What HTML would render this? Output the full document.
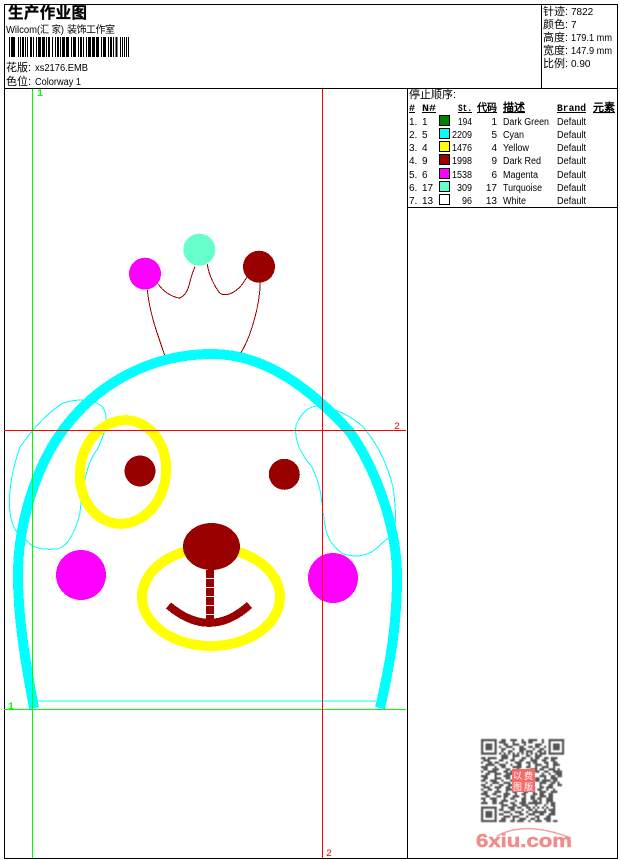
<!DOCTYPE html>
<html lang="zh">
<head>
<meta charset="utf-8">
<title>生产作业图</title>
<style>
html,body{margin:0;padding:0;background:#fff}
svg{display:block}
text{font-family:"Liberation Sans","WenQuanYi Zen Hei","Noto Sans CJK SC",sans-serif;font-size:10px;fill:#000}
.cn{font-size:11px}
.b{font-family:"Liberation Mono","WenQuanYi Zen Hei",monospace;font-weight:bold;font-size:10px;text-decoration:underline}
.g{fill:#00ff00;font-family:"Liberation Mono",monospace;font-weight:bold}
.r{fill:#ff0000;font-family:"Liberation Mono",monospace}
.s{font-size:9px;fill:#fff}
</style>
</head>
<body>
<svg width="620" height="860" viewBox="0 0 620 860" xmlns="http://www.w3.org/2000/svg">
<defs><clipPath id="qc"><rect x="0" y="0" width="37" height="37"/></clipPath></defs>
<rect width="620" height="860" fill="#fff"/>
<g shape-rendering="crispEdges" fill="none">
<g stroke="#000" stroke-width="1">
<path d="M4.5 4.5H617.5V858.5H4.5Z"/>
<path d="M4 88.5H618M541.5 4V88M407.5 88V858M407 207.5H618"/>
</g>
<path d="M9.5 37v20M11.5 37v20M14.5 37v20M18.5 37v20M20.5 37v20M25.5 37v20M27.5 37v20M33.5 37v20M36.5 37v20M40.5 37v20M44.5 37v20M46.5 37v20M52.5 37v20M55.5 37v20M60.5 37v20M64.5 37v20M68.5 37v20M71.5 37v20M75.5 37v20M78.5 37v20M83.5 37v20M86.5 37v20M90.5 37v20M94.5 37v20M98.5 37v20M101.5 37v20M105.5 37v20M108.5 37v20M113.5 37v20M120.5 37v20M122.5 37v20M124.5 37v20M126.5 37v20M128.5 37v20" stroke="#000"/>
<path d="M13 37v20M23 37v20M31 37v20M39 37v20M43 37v20M49 37v20M58 37v20M63 37v20M67 37v20M74 37v20M81 37v20M89 37v20M93 37v20M97 37v20M104 37v20M111 37v20M116.500 37v20" stroke="#000" stroke-width="2"/>
</g>

<text x="8" y="18" style="font-family:'Noto Sans CJK SC','WenQuanYi Zen Hei',sans-serif;font-size:15.5px;font-weight:bold;stroke:#000;stroke-width:.3" textLength="79">生产作业图</text>
<text x="6" y="33" textLength="31" lengthAdjust="spacingAndGlyphs">Wilcom</text>
<text x="37" y="33" textLength="27" lengthAdjust="spacingAndGlyphs">(汇 家)</text>
<text x="67" y="33" style="font-size:10px" textLength="48">装饰工作室</text>
<text x="6" y="71" class="cn">花版:</text><text x="35" y="71" textLength="53" lengthAdjust="spacingAndGlyphs">xs2176.EMB</text>
<text x="6" y="85" class="cn">色位:</text><text x="35" y="85" textLength="46" lengthAdjust="spacingAndGlyphs">Colorway 1</text>

<text x="543" y="15" class="cn">针迹:</text><text x="571" y="15">7822</text>
<text x="543" y="28" class="cn">颜色:</text><text x="571" y="28">7</text>
<text x="543" y="41" class="cn">高度:</text><text x="571" y="41" textLength="41" lengthAdjust="spacingAndGlyphs">179.1 mm</text>
<text x="543" y="54" class="cn">宽度:</text><text x="571" y="54" textLength="41" lengthAdjust="spacingAndGlyphs">147.9 mm</text>
<text x="543" y="67" class="cn">比例:</text><text x="571" y="67">0.90</text>

<text x="409" y="98" class="cn">停止顺序:</text>
<text x="409" y="111" class="b">#</text><text x="422" y="111" class="b" textLength="14" lengthAdjust="spacingAndGlyphs">N#</text>
<text x="458" y="111" class="b" textLength="14" lengthAdjust="spacingAndGlyphs">St.</text><text x="477" y="111" class="b" style="font-size:10px">代码</text>
<text x="503" y="111" class="b" style="font-size:11px">描述</text><text x="557" y="111" class="b" textLength="29" lengthAdjust="spacingAndGlyphs">Brand</text>
<text x="593" y="111" class="b" style="font-size:11px">元素</text>

<g shape-rendering="crispEdges" stroke="#000">
<rect x="439.500" y="115.500" width="10" height="10" fill="#008000"/>
<rect x="439.500" y="128.500" width="10" height="10" fill="#00ffff"/>
<rect x="439.500" y="141.500" width="10" height="10" fill="#ffff00"/>
<rect x="439.500" y="154.500" width="10" height="10" fill="#990000"/>
<rect x="439.500" y="168.500" width="10" height="10" fill="#ff00ff"/>
<rect x="439.500" y="181.500" width="10" height="10" fill="#66ffcc"/>
<rect x="439.500" y="194.500" width="10" height="10" fill="#ffffff"/>
</g>

<g>
<text x="409" y="125">1.</text><text x="422" y="125">1</text><text x="458" y="125" textLength="14" lengthAdjust="spacingAndGlyphs">194</text><text x="497" y="125" text-anchor="end">1</text><text x="503" y="125" textLength="46" lengthAdjust="spacingAndGlyphs">Dark Green</text><text x="557" y="125" textLength="29" lengthAdjust="spacingAndGlyphs">Default</text>
<text x="409" y="138">2.</text><text x="422" y="138">5</text><text x="452" y="138" textLength="20" lengthAdjust="spacingAndGlyphs">2209</text><text x="497" y="138" text-anchor="end">5</text><text x="503" y="138" textLength="21" lengthAdjust="spacingAndGlyphs">Cyan</text><text x="557" y="138" textLength="29" lengthAdjust="spacingAndGlyphs">Default</text>
<text x="409" y="151">3.</text><text x="422" y="151">4</text><text x="452" y="151" textLength="20" lengthAdjust="spacingAndGlyphs">1476</text><text x="497" y="151" text-anchor="end">4</text><text x="503" y="151" textLength="26" lengthAdjust="spacingAndGlyphs">Yellow</text><text x="557" y="151" textLength="29" lengthAdjust="spacingAndGlyphs">Default</text>
<text x="409" y="164">4.</text><text x="422" y="164">9</text><text x="452" y="164" textLength="20" lengthAdjust="spacingAndGlyphs">1998</text><text x="497" y="164" text-anchor="end">9</text><text x="503" y="164" textLength="38" lengthAdjust="spacingAndGlyphs">Dark Red</text><text x="557" y="164" textLength="29" lengthAdjust="spacingAndGlyphs">Default</text>
<text x="409" y="178">5.</text><text x="422" y="178">6</text><text x="452" y="178" textLength="20" lengthAdjust="spacingAndGlyphs">1538</text><text x="497" y="178" text-anchor="end">6</text><text x="503" y="178" textLength="35" lengthAdjust="spacingAndGlyphs">Magenta</text><text x="557" y="178" textLength="29" lengthAdjust="spacingAndGlyphs">Default</text>
<text x="409" y="191">6.</text><text x="422" y="191">17</text><text x="457" y="191" textLength="15" lengthAdjust="spacingAndGlyphs">309</text><text x="497" y="191" text-anchor="end">17</text><text x="503" y="191" textLength="39" lengthAdjust="spacingAndGlyphs">Turquoise</text><text x="557" y="191" textLength="29" lengthAdjust="spacingAndGlyphs">Default</text>
<text x="409" y="204">7.</text><text x="422" y="204">13</text><text x="462" y="204" textLength="10" lengthAdjust="spacingAndGlyphs">96</text><text x="497" y="204" text-anchor="end">13</text><text x="503" y="204" textLength="23" lengthAdjust="spacingAndGlyphs">White</text><text x="557" y="204" textLength="29" lengthAdjust="spacingAndGlyphs">Default</text>
</g>

<!-- design -->
<g shape-rendering="crispEdges" fill="none">
<path stroke="#990000" stroke-width="1" d="M147.300 290C149 305 152 318 156.700 331.700S163 351 165.300 356.700"/>
<path stroke="#990000" stroke-width="1" d="M158.300 284.300C163 291 170 296 179.300 298.300C186 295 188 290 190 281.700S193 272 195 266.700"/>
<path stroke="#990000" stroke-width="1" d="M207.300 264.300C209 276 215 287 220 293.300C226 297 235 293 241.700 285L247.300 276.700"/>
<path stroke="#990000" stroke-width="1" d="M260.300 281.700C260 298 257 312 251.700 328.300C248 340 244 348 240 354.300"/>
<circle cx="145" cy="273.700" r="16" fill="#ff00ff"/>
<circle cx="199.300" cy="249.700" r="16" fill="#66ffcc"/>
<circle cx="259" cy="266.700" r="16" fill="#990000"/>

<path stroke="#00ffff" stroke-width="1" d="M26 540 C33 549 43 550 57 549 C68 547 76 530 80 513 C82 490 87 461 97 450 C105 433 110 420 103 407 C93 399 80 398 63 403 C47 413 32 430 20 447 C12 470 8 493 10 513 C12 528 18 535 26 540Z"/>
<path stroke="#00ffff" stroke-width="1" d="M323.500 513 C325 535 330 545 343 554 C357 558 370 556 380 545 C388 538 392 535 394 534 C396 525 396 505 393 487 C387 463 377 443 363 427 C350 415 337 410 323 406 C310 405 303 410 296 425 C294 440 300 453 312 467 C318 480 321 490 322 505"/>
<path stroke="#00ffff" stroke-width="1" d="M37 701H376"/>

<path stroke="#00ffff" stroke-width="10" d="M34 708C26 665 18 620 18 575C18 525 35 468 63 430C100 380 155 354 212 354C265 354 310 388 350 432C375 468 397 525 397 577C397 625 390 665 380 708"/>

<ellipse cx="123" cy="472" rx="43" ry="52" transform="rotate(8 123 472)" stroke="#ffff00" stroke-width="10"/>
<ellipse cx="211" cy="597" rx="69" ry="49" stroke="#ffff00" stroke-width="10"/>
<circle cx="140" cy="471" r="15.500" fill="#990000"/>
<circle cx="284.300" cy="474.300" r="15.500" fill="#990000"/>
<circle cx="81" cy="575" r="25" fill="#ff00ff"/>
<circle cx="333" cy="578" r="25" fill="#ff00ff"/>
<ellipse cx="211.500" cy="546.500" rx="28.500" ry="23.500" fill="#990000"/>
<path d="M210 570V623" stroke="#990000" stroke-width="8" stroke-dasharray="8 1"/>
<path d="M168.500 605.500Q210 640.500 249.500 605" stroke="#990000" stroke-width="8"/>

<path stroke="#00ff00" stroke-width="1" d="M32.500 89V858M4 709.500H406"/>
<path stroke="#ff0000" stroke-width="1" d="M322.500 89V858M4 430.500H406"/>
</g>
<text x="37" y="96" class="g">1</text>
<text x="8" y="709" class="g">1</text>
<text x="394" y="429" class="r">2</text>
<text x="326" y="856" class="r">2</text>

<!-- QR -->
<g transform="translate(481 739) scale(2.25)" fill="none" style="filter:blur(.2px)">
<g clip-path="url(#qc)">
<path stroke="#555" stroke-width="1" d="M0 .5h7m2 0h2m2 0h3m2 0h1m2 0h4m2 0h1m3 0h7M0 1.500h1m5 0h1m1 0h3m3 0h1m3 0h2m1 0h2m4 0h1m1 0h1m5 0h1M0 2.500h1m1 0h3m1 0h1m3 0h2m2 0h3m2 0h1m4 0h3m2 0h1m1 0h3m1 0h1M0 3.500h1m1 0h3m1 0h1m1 0h1m2 0h3m3 0h2m2 0h2m1 0h2m2 0h1m1 0h3m1 0h1M0 4.500h1m1 0h3m1 0h1m2 0h2m3 0h1m2 0h3m3 0h1m2 0h2m1 0h1m1 0h3m1 0h1M0 5.500h1m5 0h1m2 0h1m2 0h2m3 0h2m1 0h3m2 0h2m1 0h1m5 0h1M0 6.500h7m1 0h1m1 0h1m1 0h1m1 0h1m1 0h1m1 0h1m1 0h1m1 0h1m1 0h1m1 0h7M9 7.500h3m2 0h3m3 0h2m2 0h3M0 8.500h2m1 0h4m2 0h3m2 0h1m3 0h2m2 0h1m1 0h2m2 0h2m1 0h3M1 9.500h3m4 0h2m3 0h2m2 0h2m3 0h3m2 0h2m2 0h2M0 10.500h1m2 0h2m1 0h2m3 0h1m3 0h3m2 0h2m1 0h2m3 0h2m2 0h2M2 11.500h4m2 0h3m2 0h1m2 0h2m3 0h1m2 0h3m2 0h1m2 0h3M0 12.500h3m3 0h1m2 0h2m3 0h4m2 0h2m2 0h1m2 0h3m2 0h1M1 13.500h2m2 0h3m3 0h2m3 0h1m5 0h3m1 0h2m2 0h3m1 0h1M0 14.500h1m2 0h4m3 0h2m1 0h1m10 0h2m2 0h2m2 0h4M2 15.500h2m2 0h3m2 0h3m13 0h1m2 0h1m2 0h3M0 16.500h3m3 0h1m3 0h3m13 0h3m2 0h2m1 0h2M1 17.500h2m3 0h3m2 0h2m11 0h2m2 0h1m2 0h3M0 18.500h2m2 0h3m2 0h1m3 0h2m9 0h2m1 0h4m1 0h2M2 19.500h1m2 0h3m2 0h3m13 0h3m2 0h2m1 0h1M0 20.500h2m2 0h1m3 0h2m2 0h3m11 0h1m3 0h2m2 0h2M1 21.500h3m2 0h3m2 0h2m3 0h3m3 0h2m2 0h2m1 0h3M0 22.500h1m2 0h2m2 0h1m3 0h3m2 0h1m1 0h1m2 0h3m1 0h2m2 0h1m2 0h1M1 23.500h2m3 0h3m2 0h1m2 0h2m3 0h2m2 0h1m2 0h3m2 0h3M0 24.500h3m2 0h2m3 0h3m2 0h1m2 0h2m3 0h2m1 0h2m2 0h2M2 25.500h2m3 0h2m1 0h2m2 0h3m2 0h1m2 0h2m2 0h3m1 0h2M0 26.500h2m2 0h3m3 0h1m2 0h2m3 0h2m2 0h2m1 0h2m2 0h3M1 27.500h1m3 0h2m2 0h3m3 0h1m2 0h2m3 0h2m1 0h1m2 0h3M0 28.500h3m2 0h2m1 0h2m3 0h2m2 0h3m1 0h6m2 0h1m1 0h2M9 29.500h3m2 0h2m2 0h3m3 0h1m3 0h1m2 0h2M9 30.500h1m2 0h3m1 0h2m2 0h2m1 0h1m1 0h1m1 0h1m1 0h1m2 0h1M8 31.500h2m3 0h2m3 0h1m2 0h2m1 0h1m3 0h1m1 0h3M10 32.500h3m2 0h3m2 0h1m2 0h6m2 0h2M8 33.500h2m3 0h1m3 0h2m2 0h3m2 0h2m2 0h3M10 34.500h3m1 0h3m3 0h1m3 0h2m3 0h2M9 35.500h2m3 0h1m2 0h3m2 0h2m1 0h1m2 0h3M8 36.500h3m2 0h2m1 0h3m2 0h1m2 0h3m2 0h2m1 0h2"/>
<rect x="29" y="0" width="8" height="8" fill="#fff"/>
<rect x="30.500" y=".5" width="6" height="6" stroke="#555" fill="none"/>
<rect x="32" y="2" width="3" height="3" fill="#555"/>
<rect x=".5" y="30.500" width="6" height="6" stroke="#555" fill="none"/>
<rect x="2" y="32" width="3" height="3" fill="#555"/>
</g>
</g>
<rect x="512" y="769" width="23" height="23" fill="#f76a6a"/>
<text x="513" y="779" class="s">以</text><text x="524" y="779" class="s">费</text>
<text x="513" y="790" class="s">图</text><text x="524" y="790" class="s">版</text>

<path d="M497 836C515 826 540 826 571 838" fill="none" stroke="#f5a0a0" stroke-width="1.500"/>
<text x="476" y="847" textLength="96" lengthAdjust="spacingAndGlyphs" style="font-size:18px;font-weight:bold;fill:#f08c8c;stroke:#f08c8c;stroke-width:.5">6xiu.com</text>
</svg>
</body>
</html>
